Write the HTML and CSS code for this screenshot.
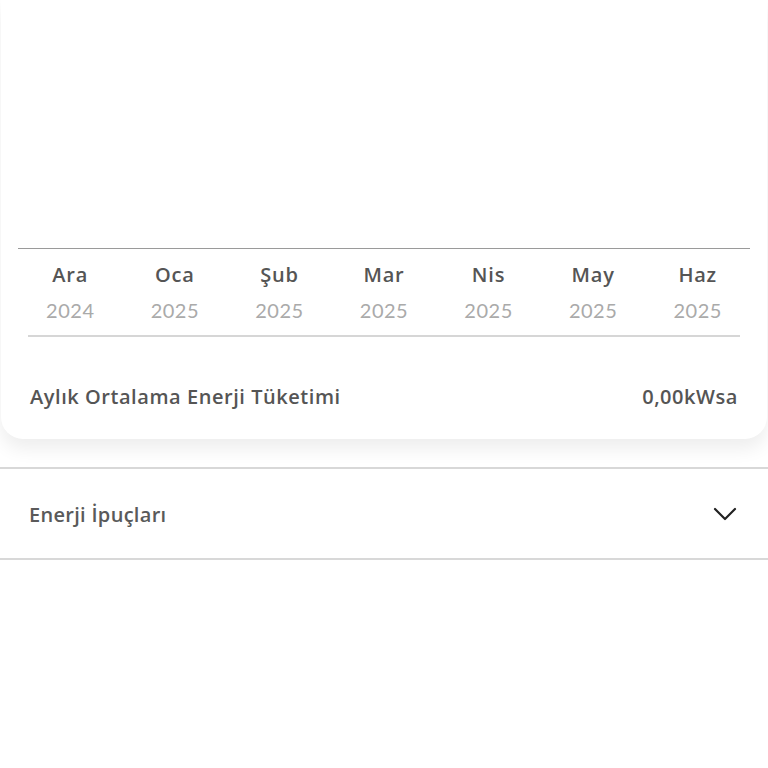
FILE: index.html
```html
<!DOCTYPE html>
<html lang="tr">
<head>
<meta charset="utf-8">
<link rel="stylesheet" href="styles.css">
</head>
<body>
<div class="card">
  <div class="months">
    <div class="m"><span class="mn">Ara</span><span class="yr">2024</span></div>
    <div class="m"><span class="mn">Oca</span><span class="yr">2025</span></div>
    <div class="m"><span class="mn">Şub</span><span class="yr">2025</span></div>
    <div class="m"><span class="mn">Mar</span><span class="yr">2025</span></div>
    <div class="m"><span class="mn">Nis</span><span class="yr">2025</span></div>
    <div class="m"><span class="mn">May</span><span class="yr">2025</span></div>
    <div class="m"><span class="mn">Haz</span><span class="yr">2025</span></div>
  </div>
  <div class="sep"></div>
  <div class="summary">
    <span>Aylık Ortalama Enerji Tüketimi</span>
    <span>0,00kWsa</span>
  </div>
</div>
<div class="tips">
  <span class="tips-title">Enerji İpuçları</span>
  <svg class="chev" width="24" height="14" viewBox="0 0 24 14"><path d="M2 2 L12 12 L22 2" fill="none" stroke="#222" stroke-width="2.2" stroke-linecap="round" stroke-linejoin="round"/></svg>
</div>
</body>
</html>
```
FILE: styles.css
```css
html, body {
  margin: 0;
  padding: 0;
  background: #fff;
  font-family: "Open Sans", Lato, sans-serif;
}
.card {
  margin: 0 1px;
  padding-top: 248px;
  padding-bottom: 29px;
  background: #fff;
  border-radius: 0 0 22px 22px;
  box-shadow: 0 10px 18px rgba(0,0,0,0.07);
}
.months {
  margin: 0 17px;
  border-top: 1.5px solid #9a9a9a;
  display: grid;
  grid-template-columns: repeat(7, 1fr);
  padding-top: 13px;
  padding-bottom: 12px;
}
.m {
  display: flex;
  flex-direction: column;
  align-items: center;
}
.mn {
  font-size: 20px;
  font-weight: 600;
  color: #555;
  line-height: 26px;
  letter-spacing: 0.8px;
}
.yr {
  font-family: Lato, sans-serif;
  font-size: 20px;
  color: #aaa;
  line-height: 26px;
  margin-top: 9px;
  letter-spacing: 0.5px;
}
.sep {
  margin: 0 27px;
  border-top: 2px solid #d6d6d6;
}
.summary {
  display: flex;
  justify-content: space-between;
  margin: 0 29px;
  padding-top: 47px;
  font-size: 20px;
  font-weight: 600;
  color: #555;
  line-height: 26px;
  letter-spacing: 0.55px;
}
.tips {
  margin-top: 28px;
  border-top: 2px solid #d8d8d8;
  border-bottom: 2px solid #d8d8d8;
  height: 89px;
  display: flex;
  align-items: center;
  justify-content: space-between;
  padding: 0 31px 0 29px;
}
.tips-title {
  font-size: 20px;
  color: #5a5a5a;
  font-weight: 600;
  letter-spacing: 0.3px;
  padding-top: 2px;
}
.chev {
  display: block;
}
```
